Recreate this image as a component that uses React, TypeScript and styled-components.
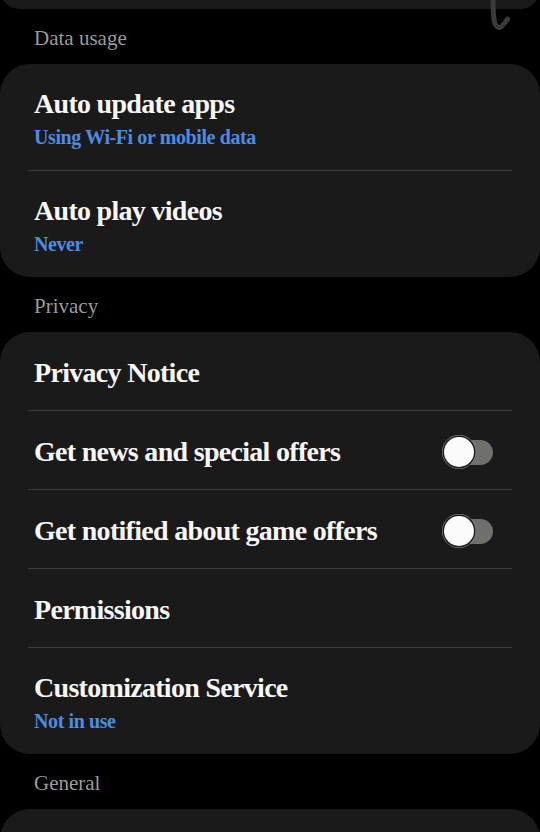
import * as React from 'react';
import styled, { createGlobalStyle } from 'styled-components';

const GlobalStyle = createGlobalStyle`
	html, body {
		margin: 0;
		padding: 0;
		background: #000;
	}
	body {
		font-family: 'Liberation Serif', 'Times New Roman', serif;
		-webkit-font-smoothing: antialiased;
	}
`;

type Item = {
	title: string;
	sub?: string;
	toggle?: boolean;
};

type Section = {
	label?: string;
	items: Item[];
};

const SECTIONS: Section[] = [
	{
		label: 'Data usage',
		items: [
			{ title: 'Auto update apps', sub: 'Using Wi-Fi or mobile data' },
			{ title: 'Auto play videos', sub: 'Never' },
		],
	},
	{
		label: 'Privacy',
		items: [
			{ title: 'Privacy Notice' },
			{ title: 'Get news and special offers', toggle: true },
			{ title: 'Get notified about game offers', toggle: true },
			{ title: 'Permissions' },
			{ title: 'Customization Service', sub: 'Not in use' },
		],
	},
	{
		label: 'General',
		items: [{ title: '' }],
	},
];

const Viewport = styled.div`
	position: relative;
	width: 540px;
	height: 832px;
	overflow: hidden;
	background: #000;
`;

// page is scrolled: the previous card only shows its bottom edge
const Scroller = styled.div`
	display: flex;
	flex-direction: column;
	margin-top: -30px;
`;

const Card = styled.div`
	background: #1a1a1a;
	border-radius: 30px;
	display: flex;
	flex-direction: column;
`;

const CardTail = styled(Card)`
	height: 39px;
`;

const SectionLabel = styled.div`
	padding: 17px 34px 14px;
	font-size: 21px;
	line-height: 24px;
	color: #9b9b9b;
`;

const Row = styled.div<{ $twoLine: boolean }>`
	display: flex;
	align-items: flex-start;
	justify-content: space-between;
	padding: ${(p) => (p.$twoLine ? '23px 34px 18px' : '24px 34px 20px')};
`;

const Texts = styled.div`
	display: flex;
	flex-direction: column;
`;

const Title = styled.div`
	font-size: 28px;
	line-height: 34px;
	font-weight: 700;
	letter-spacing: -0.7px;
	color: #f7f7f7;
`;

const Sub = styled.div`
	margin-top: 1px;
	font-size: 20px;
	line-height: 30px;
	font-weight: 700;
	letter-spacing: -0.4px;
	color: #4c8ce4;
`;

const Divider = styled.div`
	height: 1px;
	margin: 0 28px;
	background: #3b3b3b;
`;

const Track = styled.div`
	position: relative;
	width: 35px;
	height: 25px;
	margin-top: 5px;
	margin-right: 13px;
	border-radius: 13px;
	background: #6f706b;
	flex-shrink: 0;
`;

const Thumb = styled.div`
	position: absolute;
	left: -14px;
	top: -3px;
	width: 30px;
	height: 30px;
	border-radius: 50%;
	background: #fbfbfb;
	box-shadow: 0 0 0 1.5px #1a1a1a, 0 0 0 2px #9a9a9a;
`;

const Toggle = () => (
	<Track>
		<Thumb />
	</Track>
);

const Scribble = styled.svg`
	position: absolute;
	top: 0;
	left: 485px;
`;

export default function App() {
	return (
		<Viewport>
			<GlobalStyle />
			<Scroller>
				<CardTail />
				{SECTIONS.map((section) => (
					<React.Fragment key={section.label}>
						<SectionLabel>{section.label}</SectionLabel>
						<Card>
							{section.items.map((item, index) => (
								<React.Fragment key={index}>
									{index > 0 && <Divider />}
									<Row $twoLine={!!item.sub}>
										<Texts>
											<Title>{item.title || '\u00a0'}</Title>
											{item.sub && <Sub>{item.sub}</Sub>}
										</Texts>
										{item.toggle && <Toggle />}
									</Row>
								</React.Fragment>
							))}
						</Card>
					</React.Fragment>
				))}
			</Scroller>
			<Scribble width="30" height="36" viewBox="0 0 30 36">
				<path
					d="M8 -2 C 8 8, 8 16, 9.5 22 C 11 28, 15 29, 18 25 C 20 23, 21.5 21, 22.5 19"
					fill="none"
					stroke="#3a3a3a"
					strokeWidth="5"
					strokeLinecap="round"
				/>
			</Scribble>
		</Viewport>
	);
}
